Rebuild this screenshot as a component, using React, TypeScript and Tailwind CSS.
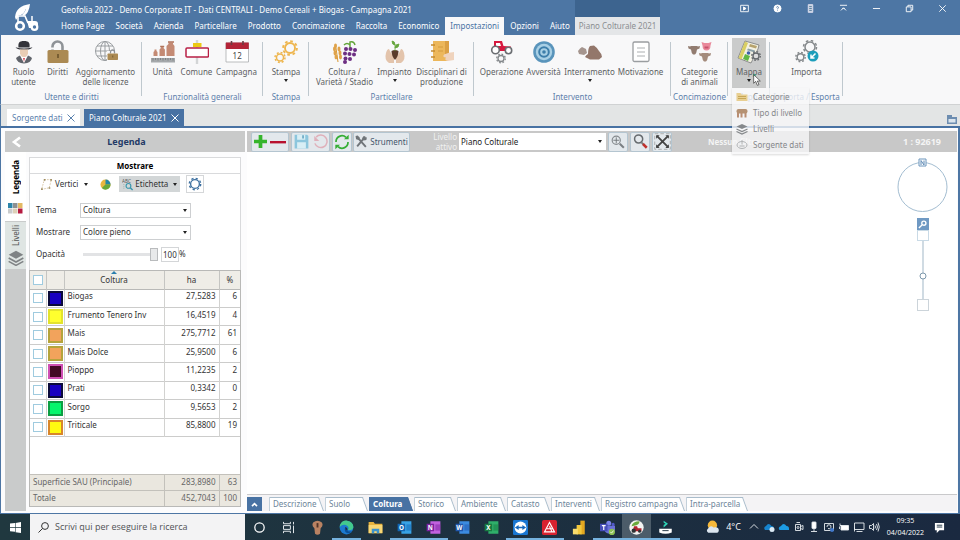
import React from "react";

type IconProps = { children: React.ReactNode; box?: string; className?: string };
const Svg = ({ children, box = "0 0 24 24", className = "h-6 w-6" }: IconProps) => (
  <svg viewBox={box} className={`shrink-0 ${className}`} fill="none" aria-hidden="true">{children}</svg>
);

/* A ring with eight teeth. */
const Gear = ({ x, y, r, color, w = 1.4 }: { x: number; y: number; r: number; color: string; w?: number }) => {
  const step = (2 * Math.PI * (r + w)) / 16;
  return (
    <g stroke={color}>
      <circle cx={x} cy={y} r={r} strokeWidth={w} />
      <circle cx={x} cy={y} r={r + w} strokeWidth={w} strokeDasharray={`${step} ${step}`} />
    </g>
  );
};

const Lock = ({ x, y, s, open }: { x: number; y: number; s: number; open?: boolean }) => (
  <g transform={`translate(${x} ${y}) scale(${s})`}>
    <path d={open ? "M5 10V6.5a5 5 0 0 1 10 0V10" : "M6 10V7a4 4 0 0 1 8 0v3"} stroke="#8f9397" strokeWidth="2.6" />
    {open && <path d="M3 7.5h4v2H3z" fill="#f8f8f9" />}
    <rect x="0" y="10" width="21" height="13" rx="1.5" fill="#ab8a53" />
    <path d="M10.5 14v4" stroke="#6b532b" strokeWidth="1.6" />
  </g>
);

const Cow = ({ x, y, c }: { x: number; y: number; c: string }) => (
  <path transform={`translate(${x} ${y})`} d="M0 1 2 1.500 3 1h6l1 .5 2-.5-.5 2.500L9 4.500 8.200 8 7 9.500H5L3.800 8 3 4.500.5 3.500z" fill={c} />
);

const icons: Record<string, React.ReactNode> = {
  role: (
    <Svg>
      <path d="M6.500 7.500C6 3 7 1 12 1s6 2 5.500 6.500z" fill="#33343a" />
      <path d="M3.500 7.200q8.500 2.600 17 0-2 2.600-8.500 2.600T3.500 7.200z" fill="#33343a" />
      <path d="M8 9.500h8v4q-1.500 4-4 4t-4-4z" fill="#e9cdb4" />
      <path d="M4 18q2-2 4-2.500l4 7.500 4-7.500q2 .5 4 2.500-1 5-8 5.500Q5 23 4 18z" fill="#60646b" />
      <path d="m9.500 16.500 2.500 6 2.500-6q-2.500 1.600-5 0z" fill="#fff" />
      <path d="m11.200 18 .8 4 .8-4z" fill="#c23" />
    </Svg>
  ),
  lock: <Svg><Lock x={1.5} y={0} s={1} open /></Svg>,
  globe: (
    <Svg>
      <g stroke="#999da0" strokeWidth="1">
        <circle cx="11" cy="11" r="9.500" />
        <ellipse cx="11" cy="11" rx="4.500" ry="9.500" />
        <path d="M1.500 11h19M3 6h16M3 16h16M11 1.500v19" />
      </g>
      <path d="M13 11h12v12H13z" fill="#f8f8f9" />
      <Lock x={13.5} y={8.5} s={0.5} />
    </Svg>
  ),
  unit: (
    <Svg>
      <path d="M2.500 16v-4l1-1V9.500h2V11l1 1v4zM8.500 16V9.500l1.200-1.200V6.500h3v1.800l1.200 1.200V16zM15.500 16V6l2-2V2.500h4.500V4l1.500 2v10z" fill="#c48a74" />
      <path d="M17 1.300h6v1.500h-6zM9.200 5.800h4v1.200h-4z" fill="#b0735b" />
      <path d="M0 18h24v4.500H0z" fill="#a5a8ab" />
      <path d="M2 18v2.500m2.500-2.500v2m2.500-2v2.500m2.500-2.500v2m2.500-2v2.500m2.500-2.500v2m2.500-2v2.500m2.500-2.500v2m2.500-2v2.500" stroke="#6f7376" strokeWidth=".7" />
    </Svg>
  ),
  town: (
    <Svg>
      <path d="M10.800 0h2.400v24h-2.400z" fill="#d3d5d6" />
      <path d="M8 3h8.500v4H8z" fill="#ecc913" />
      <rect x="1" y="8" width="22.500" height="9" rx="1" fill="#fff" stroke="#b81f45" strokeWidth="1.500" />
    </Svg>
  ),
  calendar: (
    <Svg>
      <path d="M1 3h22.500v19H1z" fill="#fff" stroke="#a9acae" strokeWidth=".8" />
      <path d="M.8 2.500h23v6.500H.8z" fill="#b32437" />
      <path d="M6.500 1v4M18 1v4" stroke="#6d3b42" strokeWidth="1.600" />
      <text x="12.200" y="18.500" fontSize="8" textAnchor="middle" fill="#444" fontFamily="Noto Sans, sans-serif">12</text>
    </Svg>
  ),
  print: <Svg><Gear x={16} y={8} r={5} color="#eeb64f" w={1.9} /><Gear x={6} y={17.5} r={3.5} color="#eeb64f" w={1.5} /></Svg>,
  crop: (
    <Svg>
      <path d="M5 22 3 8" stroke="#d99834" />
      {[[2.5, 6], [1.5, 9], [6, 9], [2, 13], [7, 13], [3, 17], [7.5, 17]].map(([x, y]) => <ellipse key={`${x}-${y}`} cx={x} cy={y} rx="1.500" ry="2.400" fill="#dfa24a" />)}
      <path d="M17 8V2q4-1 5 3M17 5q-3-3-6 0" stroke="#63a53a" strokeWidth="1.500" />
      {[[13, 9], [17.5, 9], [22, 10], [12, 13.5], [16.5, 14], [21, 14.5], [12.5, 18.5], [17, 19], [12, 22]].map(([x, y]) => <circle key={`${x}-${y}`} cx={x} cy={y} r="2" fill="#6d2f83" />)}
    </Svg>
  ),
  plant: (
    <Svg>
      <path d="M6 23Q1 20 3 13q1-4 3-4l2 4 3 4v6zM18 23q5-3 3-10-1-4-3-4l-2 4-3 4v6z" fill="#e3c4ac" />
      <path d="M8.500 11q3.500-2 7 0 0 5-3.500 9-3.500-4-3.500-9z" fill="#5a3c2c" />
      <path d="M12 11V4m0 1q-3 0-3-4 3 0 3 4zm0 3q0-4 4-4 0 4-4 4z" fill="#66a63e" stroke="#66a63e" strokeWidth=".8" />
    </Svg>
  ),
  scroll: (
    <Svg>
      <path d="M3 1h15v20H3z" fill="#ecb75b" />
      <path d="M15 1h4v13h-4z" fill="#dba045" />
      <path d="M1 5h4m-4 6h4m-4 6h4" stroke="#c48a31" strokeWidth="1.400" />
      <path d="M8 7h5m-5 4h5" stroke="#d49c3f" />
      <path d="M24 12q-5 0-10 2.500-2 3 2 3-2 3 2 3.500l6-1z" fill="#efd3bd" />
    </Svg>
  ),
  tractor: (
    <Svg>
      <path d="M4 9V1h8l1.500 5L21 6.500V11H9z" fill="#d7193f" />
      <path d="M6 3h4l1 3H6z" fill="#fff" />
      <g fill="#fff" stroke="#6b6e72" strokeWidth="1.600"><circle cx="5.500" cy="10" r="3.800" /><circle cx="18.500" cy="10.500" r="3.200" /></g>
      <Gear x={11} y={18.5} r={3} color="#85898c" w={1.3} />
    </Svg>
  ),
  target: (
    <Svg>
      <circle cx="12" cy="12" r="10.800" fill="#5994bb" />
      <circle cx="12" cy="12" r="8.200" fill="#a9d0e5" />
      <circle cx="12" cy="12" r="4.800" fill="#a9d0e5" stroke="#3d7eaa" strokeWidth="2" />
      <circle cx="12" cy="12" r="1.800" fill="#3d7eaa" />
    </Svg>
  ),
  soil: (
    <Svg>
      <path d="M0 11q2-3 4-4l4 2 1 4-3 2-5-1z" fill="#a5958e" />
      <path d="M7 17q1-2 3-3 0-6 2-8l4-.5q3 2 5 5.500 3 3 3 6l-3 2.500h-9z" fill="#93776b" />
    </Svg>
  ),
  memo: (
    <Svg>
      <rect x="4" y="2" width="16" height="19.500" rx="1.500" fill="#fff" stroke="#9a9da0" strokeWidth="1.300" />
      <path d="M8 8h8m-8 4h8M8 16h8" stroke="#acafb1" />
    </Svg>
  ),
  animals: (
    <Svg>
      <Cow x={0} y={5} c="#927c70" /><Cow x={11} y={12} c="#a48b7c" />
      <path d="M13.500 2 16.500 3h4l3-1-1 3.500q0 5-4 5t-4-5z" fill="#e9899b" />
      <path d="M16.500 6.500h4v2h-4z" fill="#c7526c" />
    </Svg>
  ),
  map: (
    <Svg>
      <path d="m8 1 14 4-1 4-7 14L1 18z" fill="#f3f1e2" stroke="#77797a" strokeWidth=".8" />
      <path d="M8 1.500 1.500 18l3 1.500L11 3z" fill="#d9cf62" />
      <path d="m13 4 7 2-1 2.500-7-2z" fill="#b7a36d" />
      <path d="m11 8.500 7 2-1 1.800-7-2z" fill="#8ca1a8" />
      <path d="m8 14 5 2-2 5-5-2z" fill="#5fb744" /><circle cx="11.500" cy="13" r="1.800" fill="#3e62a8" />
      <circle cx="19" cy="16" r="4" fill="#ddd" />
      <Gear x={19} y={16} r={3} color="#63676a" w={1.3} />
    </Svg>
  ),
  import: (
    <Svg>
      <Gear x={15} y={7} r={5} color="#84888b" w={1.5} /><Gear x={5.5} y={17} r={3.3} color="#84888b" w={1.4} />
      <circle cx="18" cy="16" r="5.500" fill="#1c9ebb" />
      <path d="m20.500 13.500-4.500 4.500m0-3.500V18h3.500" stroke="#fff" strokeWidth="1.500" />
    </Svg>
  ),
};

type Item = { icon: string; text: string[]; w: string; arrow?: boolean; menu?: boolean };
const groups: { label: string; w: string; items: Item[] }[] = [
  { label: "Utente e diritti", w: "w-[141px]", items: [
    { icon: "role", text: ["Ruolo", "utente"], w: "w-[34px]" },
    { icon: "lock", text: ["Diritti"], w: "w-[34px]" },
    { icon: "globe", text: ["Aggiornamento", "delle licenze"], w: "w-[62px]" } ] },
  { label: "Funzionalità generali", w: "w-[121px]", items: [
    { icon: "unit", text: ["Unità"], w: "w-[32px]" },
    { icon: "town", text: ["Comune"], w: "w-[36px]" },
    { icon: "calendar", text: ["Campagna"], w: "w-[44px]" } ] },
  { label: "Stampa", w: "w-[46px]", items: [{ icon: "print", text: ["Stampa"], w: "w-[34px]", arrow: true }] },
  { label: "Particellare", w: "w-[165px]", items: [
    { icon: "crop", text: ["Coltura /", "Varietà / Stadio"], w: "w-[60px]" },
    { icon: "plant", text: ["Impianto"], w: "w-[40px]", arrow: true },
    { icon: "scroll", text: ["Disciplinari di", "produzione"], w: "w-[54px]" } ] },
  { label: "Intervento", w: "w-[197px]", items: [
    { icon: "tractor", text: ["Operazione"], w: "w-[44px]" },
    { icon: "target", text: ["Avversità"], w: "w-[40px]" },
    { icon: "soil", text: ["Interramento"], w: "w-[52px]", arrow: true },
    { icon: "memo", text: ["Motivazione"], w: "w-[50px]" } ] },
  { label: "Concimazione", w: "w-[57px]", items: [{ icon: "animals", text: ["Categorie", "di animali"], w: "w-[44px]" }] },
  { label: "Mappa", w: "w-[42px]", items: [{ icon: "map", text: ["Mappa"], w: "w-[34px]", arrow: true, menu: true }] },
  { label: "Importa / Esporta", w: "w-[73px]", items: [{ icon: "import", text: ["Importa"], w: "w-[40px]" }] },
];

const mapMenu = [
  { text: "Categorie", icon: <Svg className="h-3 w-3"><path d="M1 4h8l2 3h12v13H1z" fill="#e8cf92" /><path d="M4 11h16M4 15h16" stroke="#c7a757" strokeWidth="2" /></Svg> },
  { text: "Tipo di livello", icon: <Svg className="h-3 w-3"><rect x="1" y="4" width="22" height="9" rx="4" fill="#b59172" /><path d="M4 12v9m7-9v9m8-9v9" stroke="#b98e73" strokeWidth="4" /></Svg> },
  { text: "Livelli", icon: <Svg className="h-3 w-3"><path d="m12 2 11 5-11 5L1 7z" fill="#85888b" /><path d="m1 12 11 5 11-5M1 17l11 5 11-5" stroke="#85888b" strokeWidth="2.500" /></Svg> },
  { text: "Sorgente dati", icon: <Svg className="h-3 w-3"><ellipse cx="12" cy="12" rx="10" ry="7" stroke="#b1b4b6" strokeWidth="2" /><path d="M12 2v9M7 14h10" stroke="#b1b4b6" strokeWidth="2" /></Svg> },
];

const RibbonButton = ({ item }: { item: Item }) => (
  <div className={`relative ${item.w}`}>
    <button className={`flex h-[50px] w-full flex-col items-center pt-[2px] ${item.menu ? "bg-[#cacbcb]" : ""}`}>
      {icons[item.icon]}
      <span className="mt-[3px] flex flex-col items-center whitespace-nowrap leading-[10px]">
        {item.text.map((t) => <span key={t}>{t}</span>)}
        {item.arrow && <span className="mt-[2px] h-0 w-0 border-x-2 border-t-[3px] border-x-transparent border-t-[#222]" />}
      </span>
    </button>
    {item.menu && (
      <>
        <ul role="menu" className="absolute top-[50px] left-0 z-20 w-[77px] bg-[#f6f6f7]/80 py-px shadow-[0_1px_2px_rgba(0,0,0,0.15)]">
          {mapMenu.map((m) => (
            <li key={m.text} role="menuitem" className="flex h-4 items-center gap-[5px] pl-1 whitespace-nowrap text-[#85878a]">
              {m.icon}{m.text}
            </li>
          ))}
        </ul>
        <svg viewBox="0 0 12 18" className="absolute top-[36px] left-[21px] z-30 h-[12px] w-2" aria-hidden="true">
          <circle cx="2" cy="2" r="2" fill="#3fb08a" />
          <path d="M1 1v13l3-3 2.500 6 2.500-1-2.500-5.500H11z" fill="#fff" stroke="#333" />
        </svg>
      </>
    )}
  </div>
);

const menu = ["Home Page", "Società", "Azienda", "Particellare", "Prodotto", "Concimazione", "Raccolta", "Economico", "Impostazioni", "Opzioni", "Aiuto"];

const windowIcons: [string, React.ReactNode][] = [
  ["Video", <><path d="M1 2h12v10H1z" /><path d="m5.500 4.500 4 2.500-4 2.500z" fill="#fff" /></>],
  ["Guida", <><circle cx="7" cy="7" r="5.500" fill="#fff" /><path d="M5.500 5.500c0-2 3-2 3 0 0 1.200-1.500 1-1.500 2.500m0 1v1.200" stroke="#4f77a5" /></>],
  ["Calcolatrice", <><path d="M3.500 1h7v12h-7z" fill="#c9d6e2" stroke="#dde" /><path d="M5 4h4M5 7h4M5 10h4" stroke="#56779b" /></>],
  ["Riduci barra", <path key="p" d="M1.500 2h11M3 10l4-4 4 4M5 8l2-2 2 2" />],
  ["Riduci a icona", <path key="p" d="M1.500 7h11" />],
  ["Ripristina", <><path d="M2 4.500h7.500V12H2z" /><path d="M4.500 4.500V2H12v7.500H9.500" /></>],
  ["Chiudi", <path key="p" d="m2 2 10 10M12 2 2 12" />],
];

const Header = () => (
  <header className="flex h-[35px] shrink-0 bg-[#4d76a4] text-white">
    <div className="flex w-[55px] items-center pl-[14px]">
      <svg viewBox="0 0 26 29" className="h-[29px] w-[26px]" fill="none" role="img" aria-label="Geofolia">
        <path d="M1 14Q2 3 16 1q-1 9-6 12l-2-1q3-3 4-6Q6 7 4 14l-2 3z" fill="#fff" />
        <path d="M12 5q-1 5-5 7H4q2-6 8-7z" fill="#fff" />
        <path d="M4 19v-6h7l3 7" stroke="#fff" strokeWidth="1.600" />
        <path d="M13 18h8q3 0 3 3v4h-9z" fill="#fff" />
        <path d="M18 18v-5" stroke="#fff" strokeWidth="1.500" />
        <circle cx="6" cy="23" r="3.800" fill="#4d76a4" stroke="#fff" strokeWidth="2.600" />
        <circle cx="20.500" cy="24" r="2.800" fill="#4d76a4" stroke="#fff" strokeWidth="2.200" />
      </svg>
    </div>
    <div className="flex flex-col">
      <h1 className="flex h-[17px] items-center pt-[2px] pl-[6px] whitespace-nowrap">Geofolia 2022 - Demo Corporate IT - Dati CENTRALI - Demo Cereali + Biogas - Campagna 2021</h1>
      <nav className="flex h-[18px] gap-px pl-px whitespace-nowrap">
        {menu.map((m) => (
          <button key={m} className={`px-[5px] ${m === "Impostazioni" ? "bg-[#f8f8f9] text-[#4872a3]" : ""}`}>{m}</button>
        ))}
      </nav>
    </div>
    <div className="flex flex-col">
      <div className="h-[17px] bg-[#3d648f]" />
      <button className="h-[18px] bg-[#e4e6e8] px-1 whitespace-nowrap text-[#8b8e91]">Piano Colturale 2021</button>
    </div>
    <div className="ml-auto flex h-4 pr-px">
      {windowIcons.map(([name, art]) => (
        <button key={name} aria-label={name} className="flex w-[33px] items-center justify-center">
          <svg viewBox="0 0 14 14" className="h-[9px] w-[9px]" fill="none" stroke="#fff" strokeWidth="1.400">{art}</svg>
        </button>
      ))}
    </div>
  </header>
);

const rows = [
  ["Biogas", "27,5283", "6", "bg-[#1800c0] border-[#0b0b3a]"],
  ["Frumento Tenero Inv", "16,4519", "4", "bg-[#ffff2e] border-[#e3e32c]"],
  ["Mais", "275,7712", "61", "bg-[#f2a35c] border-[#b5a43c]"],
  ["Mais Dolce", "25,9500", "6", "bg-[#f2a35c] border-[#b5a43c]"],
  ["Pioppo", "11,2235", "2", "bg-[#430a25] border-[#cf4fb4]"],
  ["Prati", "0,3342", "0", "bg-[#1800c0] border-[#0b0b3a]"],
  ["Sorgo", "9,5653", "2", "bg-[#07f56c] border-[#0d9d43]"],
  ["Triticale", "85,8800", "19", "bg-[#fffb10] border-[#d9862a]"],
];

const tick = "block h-[10px] w-[10px] appearance-none border border-[#9fcbdf] bg-white mx-auto";
const Caret = () => <span className="block h-0 w-0 border-x-2 border-t-[3px] border-x-transparent border-t-[#222]" />;

const Field = ({ label, id, value }: { label: string; id: string; value: string }) => (
  <div className="flex h-[22px] items-center">
    <label htmlFor={id} className="w-[44px]">{label}</label>
    <div className="relative w-[111px]">
      <select id={id} className="block h-[15px] w-full appearance-none border border-[#cdcfd1] bg-white pl-[2px] leading-[12px]"><option>{value}</option></select>
      <span className="pointer-events-none absolute top-[6px] right-1"><Caret /></span>
    </div>
  </div>
);

const Columns = () => (
  <colgroup><col className="w-4" /><col className="w-[18px]" /><col /><col className="w-[55px]" /><col className="w-[21px]" /></colgroup>
);

const Legend = () => (
  <aside className="flex w-[240px] shrink-0 flex-col">
    <div className="flex h-[21px] shrink-0 items-center bg-[#c9caca]">
      <button aria-label="Chiudi pannello" className="flex w-[21px] justify-center">
        <svg viewBox="0 0 10 12" className="h-3 w-[10px]" fill="none" stroke="#fff" strokeWidth="2.600"><path d="M9 1.500 3 6l6 4.500" /></svg>
      </button>
      <h2 className="flex-1 pr-[18px] text-center text-[9px] font-bold text-[#233a66]">Legenda</h2>
    </div>
    <div className="flex min-h-0 flex-1 gap-[3px]">
      <div className="flex w-[21px] flex-col bg-[#c9cbcb]">
        <button className="flex h-[69px] flex-col items-center justify-between bg-white pt-2 pb-[7px] font-bold text-black">
          <span className="rotate-180 leading-[12px] [writing-mode:vertical-rl]">Legenda</span>
          <Svg box="0 0 15 11" className="h-[11px] w-[15px]">
            <path d="M0 0h4.500v5H0z" fill="#2c84a9" /><path d="M5 0h4.500v5H5z" fill="#8d9092" /><path d="M10 0h4.500v5H10z" fill="#e3b964" />
            <path d="M0 5.500h4.500v5H0z" fill="#c9cbcc" /><path d="M5 5.500h4.500v5H5z" fill="#ddd0b8" /><path d="M10 5.500h4.500v5H10z" fill="#b51a40" />
          </Svg>
        </button>
        <button className="mt-px flex h-[47px] flex-col items-center justify-between bg-[#dfe5e3] pt-[3px] pb-[3px] text-[#555]">
          <span className="rotate-180 leading-[12px] [writing-mode:vertical-rl]">Livelli</span>
          <Svg className="h-4 w-4"><path d="m12 1 11 6-11 6L1 7z" fill="#7f8385" /><path d="m1 12 11 6 11-6M1 17l11 6 11-6" stroke="#7f8385" strokeWidth="2.400" /></Svg>
        </button>
      </div>
      <div className="flex flex-1 flex-col pt-[5px] pr-1 pb-1 text-[#333]">
        <section className="flex h-[113px] shrink-0 flex-col border border-b-0 border-[#d9dadc] bg-white">
          <h3 className="h-4 border-b border-[#d9dadc] text-center leading-[15px] font-bold text-black">Mostrare</h3>
          <div className="flex h-5 items-center pl-[10px]">
            <button className="flex items-center gap-[2px]">
              <Svg className="h-[13px] w-[13px]"><path d="M8 3h13l-4 15-14 3z" stroke="#cdb88f" strokeWidth="1.400" strokeDasharray="3 2" /><path d="M7 2h3v3H7zm12 0h3v3h-3zm-3 15h3v3h-3zM2 19h3v3H2z" fill="#9c8a5f" /></Svg>
              Vertici <span className="ml-1"><Caret /></span>
            </button>
            <button aria-label="Grafico" className="ml-[12px]">
              <svg viewBox="0 0 12 12" className="block h-[11px] w-[11px]"><circle cx="6" cy="6" r="5.500" fill="#e9b741" /><path d="M6 6V.5A5.500 5.500 0 0 1 11.500 6z" fill="#2487a8" /><path d="M6 6h5.500A5.500 5.500 0 0 1 2 9.800z" fill="#67a83a" /></svg>
            </button>
            <button className="ml-[8px] flex h-4 items-center bg-[#d2d6d7] px-[3px]">
              <svg viewBox="0 0 13 13" className="mr-px h-[13px] w-[12px]" fill="none"><text x="0" y="4.500" fontSize="5" fill="#555" fontFamily="Noto Sans, sans-serif">ABC</text><circle cx="7" cy="8" r="2.600" stroke="#3696ac" strokeWidth="1.200" /><path d="m9 10 2.500 2.500" stroke="#3696ac" strokeWidth="1.500" /><path d="M2 6v5" stroke="#9aa" strokeDasharray="1 1" /></svg>
              Etichetta <span className="ml-[5px]"><Caret /></span>
            </button>
            <button aria-label="Impostazioni" className="ml-[6px] flex h-[18px] w-[18px] items-center justify-center border border-[#d5d7d9]">
              <Svg className="h-[14px] w-[14px]"><Gear x={12} y={12} r={7.5} color="#3c6f9f" w={2.3} /></Svg>
            </button>
          </div>
          <div className="flex flex-col pt-[5px] pl-[6px]">
            <Field label="Tema" id="tema" value="Coltura" />
            <Field label="Mostrare" id="mostrare" value="Colore pieno" />
            <div className="flex h-[22px] items-center">
              <label htmlFor="opacity" className="w-[47px]">Opacità</label>
              <input id="opacity" type="range" defaultValue={100} className="h-[14px] w-[75px] appearance-none bg-transparent [&::-webkit-slider-runnable-track]:h-[3px] [&::-webkit-slider-runnable-track]:bg-[#e2e3e5] [&::-webkit-slider-thumb]:mt-[-5px] [&::-webkit-slider-thumb]:h-[13px] [&::-webkit-slider-thumb]:w-2 [&::-webkit-slider-thumb]:appearance-none [&::-webkit-slider-thumb]:border [&::-webkit-slider-thumb]:border-[#b9bbbd] [&::-webkit-slider-thumb]:bg-[#e8e9ea]" />
              <input aria-label="Opacità in percentuale" defaultValue="100" className="ml-[3px] h-[15px] w-[18px] border border-[#d4d6d8] pl-px" />%
            </div>
          </div>
        </section>
        <div className="flex flex-1 flex-col border border-[#b9b9b7] bg-white">
          <table className="h-[166px] w-full table-fixed border-collapse">
            <Columns />
            <thead className="bg-[#efede7]">
              <tr className="h-[18px] border-b border-[#b9b9b7] [&>th]:border-r [&>th]:border-[#c5c5c2] [&>th]:font-normal [&>th:last-child]:border-r-0">
                <th><input type="checkbox" aria-label="Seleziona tutto" className={tick} /></th>
                <th aria-label="Colore" />
                <th className="relative">
                  <span className="absolute top-0 left-1/2 -ml-[3px] h-0 w-0 border-x-[3px] border-b-[3px] border-x-transparent border-b-[#2b7fae]" />
                  Coltura
                </th>
                <th>ha</th><th>%</th>
              </tr>
            </thead>
            <tbody>
              {rows.map(([name, ha, pct, color]) => (
                <tr key={name} className="border-b border-[#cccccb] [&>td]:border-r [&>td]:border-[#d2d2d0] [&>td]:p-0 [&>td:last-child]:border-r-0">
                  <td><input type="checkbox" aria-label={name} className={tick} /></td>
                  <td><span className={`mx-auto block h-[15px] w-[15px] border-2 ${color}`} /></td>
                  <td><span className="block pb-1 pl-[3px] leading-[12px]">{name}</span></td>
                  <td><span className="block pr-[3px] pb-1 text-right leading-[12px]">{ha}</span></td>
                  <td><span className="block pr-[3px] pb-1 text-right leading-[12px]">{pct}</span></td>
                </tr>
              ))}
            </tbody>
          </table>
          <table className="mt-auto w-full table-fixed border-collapse bg-[#eae7df] text-[#666]">
            <Columns />
            <tbody>
              {[["Superficie SAU (Principale)", "283,8980", "63"], ["Totale", "452,7043", "100"]].map(([name, ha, pct]) => (
                <tr key={name} className="h-4 border-t border-[#c3c1bb] [&>td]:p-0">
                  <td colSpan={3} className="border-r border-[#c3c1bb]"><span className="pl-[3px]">{name}</span></td>
                  <td className="border-r border-[#c3c1bb] text-right"><span className="pr-[3px]">{ha}</span></td>
                  <td className="text-right"><span className="pr-[3px]">{pct}</span></td>
                </tr>
              ))}
            </tbody>
          </table>
        </div>
      </div>
    </div>
  </aside>
);

const toolBox = "flex h-5 items-center justify-center rounded-[2px] border border-[#b4c5d0] bg-[#e3e8ec]";

const MapArea = () => (
  <main className="flex min-w-0 flex-1 flex-col">
    <div className="flex h-[21px] shrink-0 items-center bg-[#c8c8c8] pl-1 text-white">
      <div className={`${toolBox} w-[38px] gap-[3px]`}>
        <button aria-label="Aggiungi"><svg viewBox="0 0 14 14" className="block h-[13px] w-[13px]"><path d="M5 0h4v5h5v4H9v5H5V9H0V5h5z" fill="#35b52c" /></svg></button>
        <button aria-label="Rimuovi"><svg viewBox="0 0 16 14" className="block h-[14px] w-4"><path d="M0 6h16v2.400H0z" fill="#b8112e" /></svg></button>
      </div>
      <div className={`${toolBox} ml-[2px] w-[39px] gap-[4px]`}>
        <button aria-label="Salva"><Svg className="block h-[15px] w-[15px]"><path d="M1 1h20l2 2v20H1z" fill="#8cc6dd" /><path d="M5 1h13v8H5zM5 13h14v10H5z" fill="#d8eef5" /><path d="M13 2h3v5h-3z" fill="#75afc8" /></Svg></button>
        <button aria-label="Annulla"><Svg className="block h-[15px] w-[15px]"><path d="M5 5a10 10 0 1 1-2 10" stroke="#dfb0ba" strokeWidth="2.400" /><path d="M2 3v8h8z" fill="#dfb0ba" /></Svg></button>
      </div>
      <button aria-label="Aggiorna" className={`${toolBox} ml-[2px] w-5`}>
        <Svg className="h-[16px] w-[16px]"><path d="M3 12a9 9 0 0 1 15-7M21 12a9 9 0 0 1-15 7" stroke="#35ae35" strokeWidth="2.600" /><path d="M15 8h7V1zM9 16H2v7z" fill="#35ae35" /></Svg>
      </button>
      <button className={`${toolBox} ml-px w-[57px] gap-[2px] text-[#44566b]`}>
        <Svg className="h-[13px] w-[13px]"><path d="m5 5 15 17M19 3 4 21" stroke="#707579" strokeWidth="3.500" /><path d="M1 2l4-1 4 4-2 4-5-1zM16 2l3 3 3-1-1 5-5 1-3-4z" fill="#707579" /></Svg>
        Strumenti
      </button>
      <label htmlFor="layer" className="ml-[21px] flex w-[26px] flex-col text-right leading-[10px] text-[#f1f1f1]"><span>Livello</span><span>attivo</span></label>
      <div className="relative ml-[2px] w-[147px]">
        <select id="layer" className="block h-[17px] w-full appearance-none bg-white pl-[2px] text-[#222]"><option>Piano Colturale</option></select>
        <span className="pointer-events-none absolute top-[7px] right-1"><Caret /></span>
      </div>
      <div className="ml-[2px] flex gap-[2px]">
        <button aria-label="Zoom estensione" className={`${toolBox} w-5`}>
          <Svg className="h-[14px] w-[14px]"><circle cx="9" cy="9" r="7" stroke="#858a8e" strokeWidth="2" /><path d="M9 4v10M4 9h10" stroke="#6d7276" strokeWidth="1.500" /><path d="m15 15 7 7" stroke="#7a7f83" strokeWidth="3.500" /></Svg>
        </button>
        <button aria-label="Zoom area" className={`${toolBox} w-5`}>
          <Svg className="h-[15px] w-[15px]"><circle cx="9" cy="8" r="6.500" stroke="#666b6f" strokeWidth="2.400" /><path d="m14 14 3 3" stroke="#777" strokeWidth="3" /><path d="m16 16 6 6" stroke="#c0312e" strokeWidth="4" /></Svg>
        </button>
        <button aria-label="Schermo intero" className={`${toolBox} w-5`}>
          <Svg className="h-[17px] w-[17px]"><path d="M1 1h22v22H1z" stroke="#999" strokeWidth="1" strokeDasharray="5 3" /><path d="m4 4 16 16M20 4 4 20" stroke="#444" strokeWidth="2.600" /><path d="M3 3h5L3 8zM21 3v5l-5-5zM3 21v-5l5 5zM21 21h-5l5-5z" fill="#444" /></Svg>
        </button>
      </div>
      <span className="ml-[36px] font-bold whitespace-nowrap text-[#f4f4f4]">Nessun filtro</span>
      <span className="ml-auto pr-[16px] text-[9px] font-bold text-[#f4f4f4]">1 : 92619</span>
    </div>
    <div className="flex min-h-0 flex-1 flex-col items-end bg-white pt-[5px] pr-[9px]">
      <div className="flex w-[51px] flex-col items-center">
        <svg viewBox="0 0 51 56" className="h-[56px] w-[51px]" fill="none" role="img" aria-label="Bussola">
          <circle cx="25.500" cy="30" r="24.500" stroke="#a3bdd1" />
          <path d="M22 2h7v7h-7z" fill="#fff" stroke="#6d96bd" /><path d="M24 8V3.500L27 8V3.500" stroke="#5f8ab5" />
        </svg>
        <button aria-label="Cerca" className="mt-[5px] flex h-3 w-3 items-center justify-center bg-[#6f99c3]">
          <svg viewBox="0 0 10 10" className="h-[9px] w-[9px]" fill="none" stroke="#fff" strokeWidth="1.500"><circle cx="6.500" cy="3.500" r="2.300" /><path d="M5 5 1 9" /></svg>
        </button>
        <button aria-label="Ingrandisci" className="h-[11px] w-3 border border-[#c9dae6]" />
        <svg viewBox="0 0 8 58" className="h-[58px] w-2"><path d="M4 0v58" stroke="#d0dbe3" strokeWidth="2" /><circle cx="4" cy="35" r="3" fill="#fff" stroke="#7d98ac" /></svg>
        <button aria-label="Riduci" className="h-3 w-3 border border-[#ccd4da]" />
      </div>
    </div>
    <div className="flex h-[17px] shrink-0 border-t border-[#c9c9cb] bg-[#f4f3f5] pt-[2px] text-[#6d8599]">
      <button aria-label="Espandi" className="mr-[7px] flex w-[15px] items-center justify-center bg-[#4872a3]">
        <svg viewBox="0 0 8 6" className="h-[5px] w-[7px]" fill="none" stroke="#fff" strokeWidth="2"><path d="m1 5 3-3 3 3" /></svg>
      </button>
      {([["Descrizione", "w-[56px]"], ["Suolo", "w-[44px]"], ["Coltura", "w-[45px]"], ["Storico", "w-[43px]"], ["Ambiente", "w-[50px]"], ["Catasto", "w-[44px]"], ["Interventi", "w-[50px]"], ["Registro campagna", "w-[85px]"], ["Intra-parcella", "w-[63px]"]]).map(([t, w]) => {
        const on = t === "Coltura";
        return (
          <button key={t} className={`relative flex items-center overflow-hidden whitespace-nowrap ${w}`}>
            <span className={`absolute inset-y-0 right-px -left-2 origin-bottom skew-x-[20deg] border-t border-r ${on ? "border-[#4872a3] bg-[#4872a3]" : "border-[#a9bccb] bg-white"}`} />
            <span className={`relative h-full border-l pl-[3px] leading-[13px] ${on ? "border-[#4872a3] font-bold text-white" : "border-[#c3d0da]"}`}>{t}</span>
          </button>
        );
      })}
    </div>
  </main>
);

const Letter = ({ c, bg, side }: { c: string; bg: string; side: string }) => (
  <Svg>
    <path d="M7 2h16v20H7z" fill={side} /><path d="M15 7h8v10h-8z" fill={bg} opacity=".5" />
    <path d="M1 6h12v12H1z" fill={bg} />
    <text x="7" y="15.500" fontSize="10" fontWeight="bold" textAnchor="middle" fill="#fff" fontFamily="Noto Sans, sans-serif">{c}</text>
  </Svg>
);

const apps: { name: string; art: React.ReactNode; open?: boolean; active?: boolean }[] = [
  { name: "Cortana", art: <Svg><circle cx="12" cy="12" r="7.500" stroke="#fff" strokeWidth="2" /></Svg> },
  { name: "Visualizzazione attività", art: <Svg><path d="M4 3v3h11V3M4 21v-3h11v3M4 9h11v6H4zM20 3v4m0 2v12" stroke="#dfe4e8" strokeWidth="1.600" /></Svg> },
  { name: "Widget", art: <Svg><path d="M5 4q7-6 14 0 3 5-2 9l-1 9q-4 3-8 0l-1-9Q2 9 5 4z" fill="#b98262" /><path d="M12 5v7" stroke="#513326" strokeWidth="3" /></Svg> },
  { name: "Edge", open: true, art: <Svg><circle cx="12" cy="12" r="11" fill="#1c7ad0" /><path d="M1 11C2 3 8 0 13 1q10 2 10 10-1 6-9 5 3-4-1-7-6-4-12 2z" fill="#43c98d" /><path d="M10 11q-3 8 4 10 5 0 7-3-7 2-8-3z" fill="#0c5199" /><path d="M14 15q-1-4-4-4l1 5z" fill="#20303c" /></Svg> },
  { name: "Esplora file", art: <Svg><path d="M1 3h8l2 3h12v15H1z" fill="#e7b33d" /><path d="M1 8h22v13H1z" fill="#f8d775" /><path d="M6 21v-7h12v7h-4v-3h-4v3z" fill="#3c93cd" /></Svg> },
  { name: "Outlook", open: true, art: <Letter c="O" bg="#1266b4" side="#38a3e6" /> },
  { name: "OneNote", open: true, art: <Letter c="N" bg="#7c22a0" side="#c161df" /> },
  { name: "Word", art: <Letter c="W" bg="#2057ad" side="#3c8be0" /> },
  { name: "Excel", art: <Letter c="X" bg="#187a42" side="#2faf6a" /> },
  { name: "TeamViewer", open: true, art: <Svg><rect width="24" height="24" rx="2" fill="#1976d2" /><circle cx="12" cy="12" r="9.500" fill="#fff" /><path d="m3 12 6-4v2.800h6V8l6 4-6 4v-2.800H9V16z" fill="#1668bd" /></Svg> },
  { name: "Acrobat", open: true, art: <Svg><rect width="24" height="24" rx="3" fill="#d8222f" /><path d="M12 4 4 19h16zM12 10l4 9M8 14h10" stroke="#fff" strokeWidth="1.800" /></Svg> },
  { name: "Power BI", art: <Svg><path d="M15 1h7v22h-7z" fill="#e4a820" /><path d="M9 8h8v15H9z" fill="#f3c83c" /><path d="M3 14h8v9H3z" fill="#f8dc6d" /></Svg> },
  { name: "Teams", open: true, art: <Svg><circle cx="14" cy="5" r="4" fill="#7b83eb" /><circle cx="21" cy="7" r="2.500" fill="#5059c9" /><path d="M7 9h17v6q-2 6-9 7-7-1-8-7z" fill="#6a70d8" /><path d="M0 6h12v12H0z" fill="#464eb8" /><path d="M3 9h6M6 9v7" stroke="#fff" strokeWidth="1.800" /><circle cx="19" cy="19" r="5" fill="#8cc152" /><path d="m16.500 19 2 2 3-4" stroke="#fff" strokeWidth="1.300" /></Svg> },
  { name: "Geofolia", open: true, active: true, art: <Svg><circle cx="12" cy="12" r="11.500" fill="#f3f4f2" /><path d="M4 10q2-8 13-8-1 7-9 7z" fill="#6aa93b" /><path d="M8 10h5l1 3h6v5H6z" fill="#b4232f" /><circle cx="7.500" cy="17" r="3.500" fill="#2e3234" /><circle cx="17" cy="18" r="2.500" fill="#2e3234" /></Svg> },
  { name: "Registratore", open: true, art: <Svg><path d="m9 1 7 5-7 6V8l3-2-3-2z" fill="#2ed5b7" /><path d="M2 14h20v6q-10 4-20 0z" fill="#fff" /><path d="M7 17h10" stroke="#1d3040" strokeWidth="1.500" /></Svg> },
];

const tray: [string, React.ReactNode][] = [
  ["Mostra icone", <path key="p" d="m4 15 8-8 8 8" />],
  ["OneDrive sincronizzazione", <><path d="M4 18q-4-5 2-8 5-8 11 0 6 0 5 8z" fill="#1684ce" stroke="none" /><circle cx="18" cy="17" r="5" fill="#dceaf4" stroke="none" /></>],
  ["OneDrive", <path key="p" d="M3 18q-4-5 3-8 5-8 11 0 6 0 5 8z" fill="#1c9be4" stroke="none" />],
  ["Riunione", <><path d="M5 7h10v12H5zM15 11l5-2v8l-5-2M7 3h7" /><circle cx="10" cy="13" r="2" /></>],
  ["Microfono", <><rect x="8" y="2" width="8" height="13" rx="1" fill="#fff" /><path d="M6 21h12m-6-5v5" /></>],
  ["Aggiornamento", <><path d="M3 5h18v14H3z" /><path d="M8 12a4 4 0 1 1 2 3" /><circle cx="18" cy="18" r="4" fill="#3f76c9" stroke="none" /></>],
  ["Batteria", <><path d="M6 9h15v9H6z" fill="#fff" /><path d="M3 11v5M4 5v4h4" /></>],
  ["Rete", <><path d="M3 4h19v13H3z" /><path d="M7 21h12M3 13v8" /></>],
  ["Volume", <><path d="M3 9h4l4-4v14l-4-4H3z" /><path d="M14 9q2 3 0 6m3-9q4 6 0 12m3-15q5 9 0 18" /></>],
];

const Taskbar = () => (
  <footer className="flex h-[26px] shrink-0 bg-gradient-to-r from-[#20383f] to-[#1a2940] font-['Open_Sans','Noto_Sans',sans-serif] text-white">
    <button aria-label="Start" className="flex w-[30px] items-center justify-center">
      <svg viewBox="0 0 11 11" className="h-[11px] w-[11px]" fill="#fff"><path d="M0 1.500 5 1v4H0zM5.600.9 11 0v5H5.600zM0 5.700h5v4L0 9.200zM5.600 5.700H11V11l-5.400-.8z" /></svg>
    </button>
    <label className="flex w-[215px] items-center gap-[6px] bg-[#f3f3f4] pl-2">
      <svg viewBox="0 0 11 11" className="h-[11px] w-[11px]" fill="none" stroke="#333"><circle cx="7" cy="4" r="3.400" /><path d="M4.500 6.500.5 10.500" /></svg>
      <input aria-label="Cerca" placeholder="Scrivi qui per eseguire la ricerca" className="w-[180px] bg-transparent text-[9px] placeholder:text-[#505255] placeholder:opacity-100" />
    </label>
    <nav className="flex">
      {apps.map((a) => (
        <button key={a.name} aria-label={a.name} className={`flex w-[29px] items-center justify-center border-b-2 pt-[2px] [&>svg]:h-[15px] [&>svg]:w-[15px] ${a.open ? "border-[#76b2de]" : "border-transparent"} ${a.active ? "bg-[#4c5c69]" : ""}`}>{a.art}</button>
      ))}
    </nav>
    <div className="ml-auto flex items-center">
      <button className="mr-[6px] flex items-center gap-[6px] text-[9px]">
        <Svg className="h-[14px] w-[14px]"><circle cx="11" cy="9" r="8" fill="#f6b93a" /><path d="M4 22q-5-4 0-8 4-6 9-1 8-2 9 4 0 5-5 5z" fill="#dce6ef" /></Svg>
        4°C
      </button>
      {tray.map(([name, art]) => (
        <button key={name} aria-label={name} className="flex w-[15px] justify-center">
          <svg viewBox="0 0 24 24" className="h-3 w-3" fill="none" stroke="#e9edf0" strokeWidth="1.800">{art}</svg>
        </button>
      ))}
      <time className="mx-[5px] flex flex-col items-center text-[7px] leading-[12px]"><span>09:35</span><span>04/04/2022</span></time>
      <button aria-label="Notifiche" className="mr-[15px] ml-[5px]">
        <svg viewBox="0 0 12 12" className="h-[11px] w-[11px]"><path d="M1 1h10v8H6l-3 3V9H1z" fill="#fff" /><path d="M3 3.500h6M3 5.500h6" stroke="#1d3040" /></svg>
      </button>
    </div>
  </footer>
);

const Close = () => <svg viewBox="0 0 8 8" className="h-2 w-2" fill="none" stroke="currentColor"><path d="m.5.5 7 7m0-7-7 7" /></svg>;

export default function App() {
  return (
    <div className="flex h-screen flex-col overflow-hidden bg-white font-['Noto_Sans',sans-serif] text-[8px] leading-[12px] [&_button]:leading-[inherit]">
      <Header />
      <div className="flex h-[70px] shrink-0 border-b border-l border-[#d0d2d3] border-l-[#4d76a4] bg-[#f8f8f9] pt-[3px] text-[#5d5f63]">
        {groups.map((g) => (
          <section key={g.label} className={`relative flex flex-col items-center ${g.w}`}>
            <div className="flex h-[50px] justify-center">{g.items.map((i) => <RibbonButton key={i.icon} item={i} />)}</div>
            <h2 className="mt-[3px] whitespace-nowrap text-[#5d80ab]">{g.label}</h2>
            <span className="absolute top-1 right-0 h-[54px] w-px bg-[#bfc8ce]" />
          </section>
        ))}
      </div>
      <div className="flex h-[23px] shrink-0 items-end border-b-2 border-l border-b-[#4872a3] border-l-[#4d76a4] bg-[#e3e5e5] pl-[6px]">
        <button className="mr-1 flex h-[17px] w-[73px] items-center justify-between bg-white px-[5px] whitespace-nowrap text-[#5b82ae]">Sorgente dati <Close /></button>
        <button className="flex h-[17px] w-[100px] items-center justify-between bg-[#4872a3] px-[5px] whitespace-nowrap text-white">Piano Colturale 2021 <Close /></button>
        <button aria-label="Finestre" className="mr-[3px] mb-[2px] ml-auto">
          <svg viewBox="0 0 10 10" className="h-[10px] w-[10px]"><path d="M0 1h5v2h5v7H0z" fill="#6d8db0" /><path d="M1.500 5h7v3.500h-7z" fill="#dbe5ee" /></svg>
        </button>
      </div>
      <div className="flex min-h-0 flex-1 gap-[2px] border-r-2 border-b border-l border-[#4d76a4] bg-[#fcfcfd] pt-[3px] pr-px pb-[2px] pl-1">
        <Legend />
        <MapArea />
      </div>
      <Taskbar />
    </div>
  );
}
